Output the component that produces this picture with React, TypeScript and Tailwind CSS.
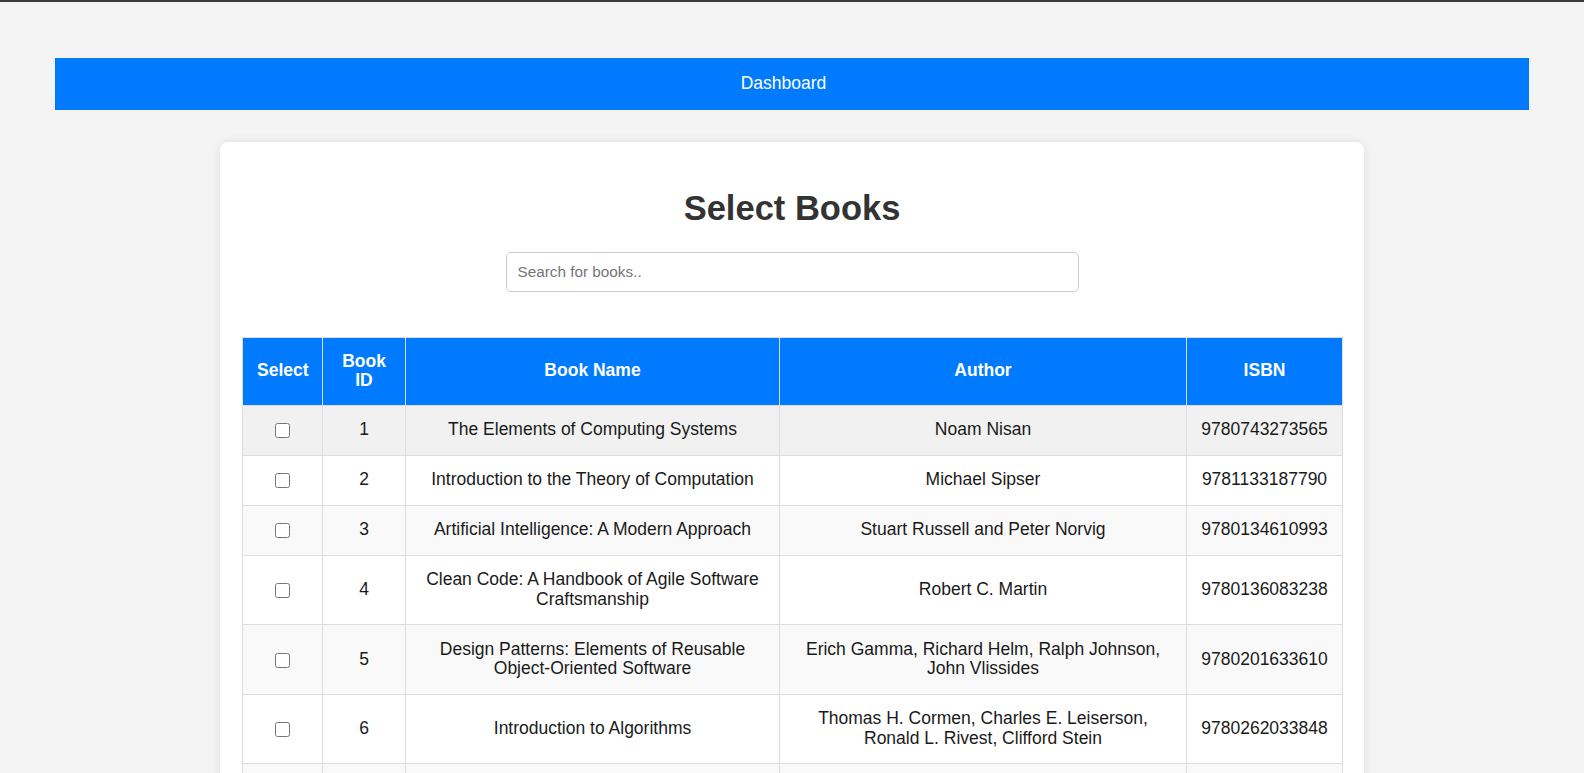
type Book = {
  id: number;
  name: string;
  author: string;
  isbn: string;
};

const books: Book[] = [
  { id: 1, name: "The Elements of Computing Systems", author: "Noam Nisan", isbn: "9780743273565" },
  { id: 2, name: "Introduction to the Theory of Computation", author: "Michael Sipser", isbn: "9781133187790" },
  { id: 3, name: "Artificial Intelligence: A Modern Approach", author: "Stuart Russell and Peter Norvig", isbn: "9780134610993" },
  { id: 4, name: "Clean Code: A Handbook of Agile Software Craftsmanship", author: "Robert C. Martin", isbn: "9780136083238" },
  { id: 5, name: "Design Patterns: Elements of Reusable Object-Oriented Software", author: "Erich Gamma, Richard Helm, Ralph Johnson, John Vlissides", isbn: "9780201633610" },
  { id: 6, name: "Introduction to Algorithms", author: "Thomas H. Cormen, Charles E. Leiserson, Ronald L. Rivest, Clifford Stein", isbn: "9780262033848" },
  { id: 7, name: "The Pragmatic Programmer", author: "Andrew Hunt, David Thomas", isbn: "9780201616224" },
  { id: 8, name: "Structure and Interpretation of Computer Programs", author: "Harold Abelson, Gerald Jay Sussman", isbn: "9780262510875" },
];

export default function App() {
  const cell = "border border-[#ddd] px-[14px] py-[14.7px] text-center align-middle leading-[19.6px]";
  const head = "border border-[#ddd] px-[14px] py-[14px] text-center font-bold leading-[19.6px]";

  return (
    <div className="min-h-screen bg-[#f4f4f4] font-['Liberation_Sans',Arial,sans-serif] text-[#1a1a1a]">
      <div className="h-[2px] bg-[#3a3a3a]" />

      <div className="px-[55px] pt-[55.5px]">
        <div className="flex h-[52px] items-center justify-center bg-[#007bff] pr-[17px] text-[17.5px] text-white">
          Dashboard
        </div>
      </div>

      <div className="mx-auto mt-[32.5px] w-[1144px] rounded-[8px] bg-white px-[22px] pt-[46px] pb-[22px] shadow-[0_0_10px_rgba(0,0,0,0.1)]">
        <h1 className="text-center text-[34.5px] font-bold leading-[40px] text-[#333]">
          Select Books
        </h1>

        <div className="mt-[24px] flex justify-center">
          <input
            type="text"
            placeholder="Search for books.."
            className="h-[40px] w-[573px] rounded-[5px] border border-[#ccc] pl-[11px] text-[15.3px] outline-none placeholder:text-[#757575]"
          />
        </div>

        <table className="mt-[44.5px] w-full table-fixed border-collapse text-[17.5px]">
          <colgroup>
            <col className="w-[80px]" />
            <col className="w-[83px]" />
            <col className="w-[374px]" />
            <col className="w-[407px]" />
            <col className="w-[156px]" />
          </colgroup>
          <thead>
            <tr className="bg-[#007bff] text-white">
              <th className={head}>Select</th>
              <th className={head}>Book ID</th>
              <th className={head}>Book Name</th>
              <th className={head}>Author</th>
              <th className={head}>ISBN</th>
            </tr>
          </thead>
          <tbody>
            {books.map((b, i) => (
              <tr
                key={b.id}
                className={i === 0 ? "bg-[#f1f1f1]" : i % 2 === 0 ? "bg-[#f9f9f9]" : "bg-white"}
              >
                <td className={cell}>
                  <input type="checkbox" className="h-[15px] w-[15px] align-middle" />
                </td>
                <td className={cell}>{b.id}</td>
                <td className={cell}>{b.name}</td>
                <td className={cell}>{b.author}</td>
                <td className={cell}>{b.isbn}</td>
              </tr>
            ))}
          </tbody>
        </table>
      </div>
    </div>
  );
}
